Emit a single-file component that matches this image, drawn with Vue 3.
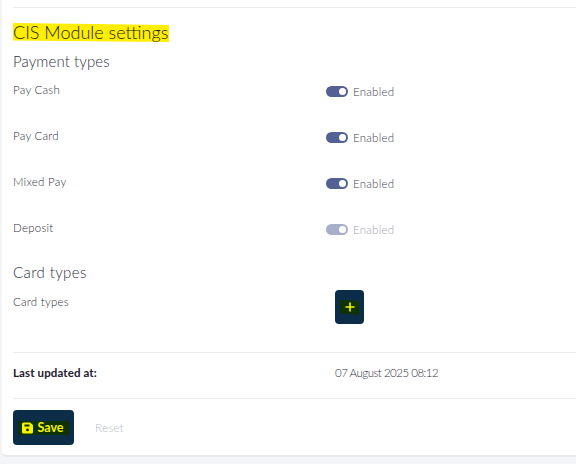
<template>
  <div class="page">
    <div class="card">
      <div class="card__inner">
        <h2 class="title"><span class="mark">CIS Module settings</span></h2>
        <h3 class="section">Payment types</h3>

        <div v-for="row in payments" :key="row.label" class="row">
          <span class="row__label">{{ row.label }}</span>
          <div class="row__value" :class="{ 'row__value--off': row.disabled }">
            <span class="switch"><span class="switch__knob" /></span>
            <span class="switch__text">Enabled</span>
          </div>
        </div>

        <h3 class="section section--card">Card types</h3>
        <div class="cards">
          <span class="row__label">Card types</span>
          <button class="add" type="button">
            <span class="add__mark">
              <svg width="10" height="10" viewBox="0 0 10 10"><path d="M5 .5v9M.5 5h9" stroke="#f5f500" stroke-width="1.6" fill="none" /></svg>
            </span>
          </button>
        </div>

        <div class="updated">
          <strong class="updated__label">Last updated at:</strong>
          <span class="updated__value">07 August 2025 08:12</span>
        </div>

        <div class="actions">
          <button class="save" type="button">
            <span class="save__mark">
              <svg width="11" height="12" viewBox="0 0 11 12">
                <path fill="#f5f500" fill-rule="evenodd" d="M2 .5h6L11 3v7a1.500 1.500 0 0 1-1.500 1.500h-8A1.500 1.500 0 0 1 0 10V2A1.500 1.500 0 0 1 1.500.5zM2.500 2.500v2h5v-2zM5.500 6.500a1.400 1.400 0 1 0 0 2.800a1.400 1.400 0 0 0 0-2.800z" />
              </svg>
              Save
            </span>
          </button>
          <span class="reset">Reset</span>
        </div>
      </div>
    </div>
  </div>
</template>

<script setup>
const payments = [
  { label: 'Pay Cash' },
  { label: 'Pay Card' },
  { label: 'Mixed Pay' },
  { label: 'Deposit', disabled: true },
]
</script>

<style>
html, body { margin: 0; background: #f4f5f9; }
</style>

<style scoped>
.page {
  height: 464px;
  overflow: hidden;
  padding-left: 2px;
  font-family: 'Lato', 'Liberation Sans', sans-serif;
  color: #2f3142;
}
.card {
  height: 457px;
  background: #fff;
  border-radius: 0 0 0 5px;
  border-bottom: 2px solid #e8e9ee;
  box-sizing: border-box;
  overflow: hidden;
}
.card__inner { padding: 7px 0 0 11px; }
.title {
  margin: 0;
  padding-top: 15px;
  border-top: 1px solid #ebedf2;
  font-size: 18px;
  font-weight: 300;
  line-height: 19px;
  height: 20px;
  color: #1a2410;
}
.mark {
  display: inline-block;
  padding: 0 1px 0 0;
  background: #ffee00;
  clip-path: polygon(0 0, 100% 10%, 100% 100%, 0 92%);
}
.section {
  margin: 9px 0 0;
  font-size: 15px;
  font-weight: 300;
  line-height: 18px;
  height: 18px;
  letter-spacing: 0.1px;
}
.section--card { margin-top: 9px; letter-spacing: 0.4px; }
.row {
  display: flex;
  height: 46px;
  padding-top: 12px;
  box-sizing: border-box;
}
.row__label {
  width: 313px;
  padding-top: 1px;
  font-size: 11.500px;
  font-weight: 300;
  line-height: 14px;
  letter-spacing: 0.25px;
  color: #2f3142;
}
.row__value {
  display: flex;
  align-items: center;
  gap: 5px;
  height: 16px;
  margin-top: 1px;
}
.row__value--off { opacity: 0.5; }
.switch {
  display: flex;
  justify-content: flex-end;
  align-items: center;
  width: 22px;
  height: 11px;
  padding: 0 2px;
  box-sizing: border-box;
  border-radius: 6px;
  background: #536293;
}
.switch__knob {
  width: 7px;
  height: 7px;
  border-radius: 50%;
  background: #fff;
}
.switch__text { font-size: 11.500px; font-weight: 300; letter-spacing: 0.25px; color: #3f4254; }
.cards {
  display: flex;
  align-items: flex-start;
  margin-top: 12px;
}
.cards .row__label { width: 322px; padding-top: 2px; }
.add {
  display: flex;
  align-items: center;
  justify-content: center;
  width: 29px;
  height: 34px;
  margin-top: -3px;
  padding: 0;
  border: 0;
  border-radius: 4px;
  background: #0b2d48;
}
.add__mark {
  display: flex;
  align-items: center;
  justify-content: center;
  width: 19px;
  height: 15px;
  background: #0f3300;
  clip-path: polygon(0 0, 100% 12%, 100% 100%, 0 92%);
}
.updated {
  display: flex;
  align-items: center;
  padding-bottom: 7px;
  height: 38px;
  margin-top: 28px;
  border-top: 1px solid #ebedf2;
  border-bottom: 1px solid #ebedf2;
  font-size: 11.500px;
}
.updated__label { width: 322px; font-weight: 700; letter-spacing: 0.12px; color: #1e2030; }
.updated__value { font-weight: 300; letter-spacing: -0.5px; color: #2f3142; }
.actions {
  display: flex;
  align-items: center;
  gap: 21px;
  margin-top: 11px;
}
.save {
  display: flex;
  align-items: center;
  justify-content: center;
  width: 61px;
  height: 35px;
  padding: 0;
  border: 0;
  border-radius: 4px;
  background: #0b2d48;
  font-family: inherit;
}
.save__mark {
  display: flex;
  align-items: center;
  gap: 4px;
  height: 14px;
  padding: 0 5px 0 4px;
  background: #0f3300;
  color: #f5f500;
  font-size: 12.500px;
  font-weight: 700;
}
.reset { font-size: 12px; font-weight: 300; color: #b9bccb; }
</style>
